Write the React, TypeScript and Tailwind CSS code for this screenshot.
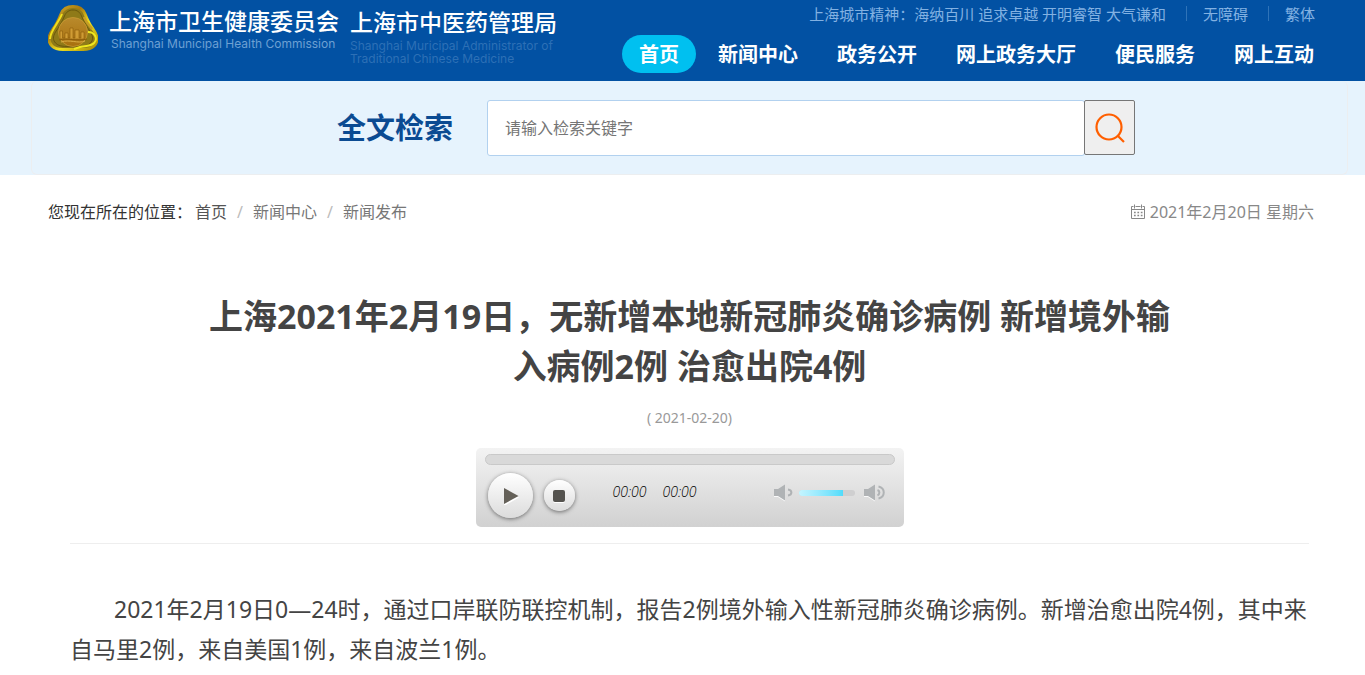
import React from "react";

const navItems = ["首页", "新闻中心", "政务公开", "网上政务大厅", "便民服务", "网上互动"];

function Emblem() {
  return (
    <svg viewBox="0 0 50 46" className="h-[46px] w-[50px] shrink-0" aria-hidden="true">
      <defs>
        <linearGradient id="rim" x1="0" y1="0" x2="1" y2="1">
          <stop offset="0" stopColor="#d9b32a" />
          <stop offset="0.35" stopColor="#a87a10" />
          <stop offset="0.6" stopColor="#f0e020" />
          <stop offset="1" stopColor="#a88a08" />
        </linearGradient>
        <linearGradient id="core" x1="0" y1="0" x2="0" y2="1">
          <stop offset="0" stopColor="#b98a2c" />
          <stop offset="1" stopColor="#a8700e" />
        </linearGradient>
      </defs>
      <path
        d="M25 1.500C31 1.500 35 4 37 9C39 14 41 19 45 24C50 31 50 37 46 41C43 44 39 44.500 35 44.500H15C11 44.500 7 44 4 41C0 37 0 31 5 24C9 19 11 14 13 9C15 4 19 1.500 25 1.500Z"
        fill="#8f7a18"
        stroke="url(#rim)"
        strokeWidth="3"
      />
      <path
        d="M25 5C29 5 32 7 33.500 11C36 17 39 22 42.500 27C45.500 32 45 35 42.500 38C40 41 34 41.500 30 41.500H20C15 41.500 10 41 7.500 38C5 35 4.500 32 7.500 27C11 22 14 17 16.500 11C18 7 21 5 25 5Z"
        fill="none"
        stroke="#6b580c"
        strokeWidth="1"
      />
      <path d="M14 9C11 17 2 26 2 34" fill="none" stroke="#efe01c" strokeWidth="2" />
      <path d="M36 12C38 17 41 20 44 24" fill="none" stroke="#c79e26" strokeWidth="2.500" />
      <path d="M40 27C47 27 50 34 46 38C42 42 38 40 32 42L26 44" fill="none" stroke="#f0e81f" strokeWidth="2" />
      <circle cx="25" cy="27" r="14.500" fill="url(#core)" stroke="#c99c33" strokeWidth="0.800" />
      <path d="M12 26H14.500V33H17V28H20V33H22V23H25V33H27V25H31V33H33V27H36V34H12Z" fill="#d09c34" stroke="#8a5c0c" strokeWidth="0.600" />
      <path d="M11 35C20 32 28 37 39 34" fill="none" stroke="#8a5c0c" strokeWidth="1" />
      <path d="M13 37C22 34 30 39 37 36" fill="none" stroke="#d9ac45" strokeWidth="1" />
    </svg>
  );
}

function Header() {
  return (
    <header className="flex h-[81px] justify-between bg-[#0251a3] pr-[50px] pl-12">
      <a href="#home" className="flex pt-[5px] text-white">
        <Emblem />
        <span className="ml-[11px] flex flex-col pt-px">
          <span className="text-[23px] leading-[30px] font-medium whitespace-nowrap">上海市卫生健康委员会</span>
          <span className="pl-0.5 font-['Inter'] text-xs leading-4 whitespace-nowrap text-[#6da0d3]">
            Shanghai Municipal Health Commission
          </span>
        </span>
        <span className="ml-[11px] flex flex-col pt-0.5">
          <span className="text-[23px] leading-[30px] font-medium whitespace-nowrap">上海市中医药管理局</span>
          <span className="flex flex-col pt-0.5 font-['Inter'] text-xs leading-[13px] whitespace-nowrap text-[#2d70b6]">
            <span>Shanghai Muricipal Administrator of</span>
            <span>Traditional Chinese Medicine</span>
          </span>
        </span>
      </a>
      <div className="flex flex-col items-end">
        <div className="flex h-[27px] items-center text-[15px] leading-5 whitespace-nowrap text-[#82b1e2]">
          <span>上海城市精神：海纳百川 追求卓越 开明睿智 大气谦和</span>
          <span className="mr-4 ml-5 h-[15px] w-px bg-[#2f73b8]" />
          <a href="#accessible">无障碍</a>
          <span className="mr-4 ml-5 h-[15px] w-px bg-[#2f73b8]" />
          <a href="#traditional">繁体</a>
        </div>
        <nav className="-mr-4 flex gap-[5px] pt-2">
          {navItems.map((item, i) => (
            <a
              key={item}
              href={`#nav-${i}`}
              className={
                i === 0
                  ? "flex h-[38px] items-center rounded-full bg-[#00c0f0] px-[17px] pt-0.5 text-xl font-bold whitespace-nowrap text-white"
                  : "flex h-[38px] items-center px-[17px] pt-0.5 text-xl font-bold whitespace-nowrap text-white"
              }
            >
              {item}
            </a>
          ))}
        </nav>
      </div>
    </header>
  );
}

function Search() {
  return (
    <section className="bg-[#e6f3fd] pr-[17px] pl-[31px]">
      <form
        className="flex h-[94px] items-start rounded-md border border-t-0 border-[#eceef0] pt-[19px] pr-[212px] pl-[305px]"
        onSubmit={(e) => e.preventDefault()}
      >
        <label htmlFor="keyword" className="mr-[34px] text-[29px] leading-[56px] font-bold whitespace-nowrap text-[#0b4b92]">
          全文检索
        </label>
        <input
          id="keyword"
          type="text"
          placeholder="请输入检索关键字"
          className="h-14 min-w-0 flex-1 rounded-[3px] border border-[#b2d1ef] bg-white px-[17px] text-base text-gray-700 placeholder:text-[#757575]"
        />
        <button
          type="submit"
          aria-label="检索"
          className="-ml-px flex h-[55px] w-[51px] items-center justify-center rounded-[2px] border border-[#767676] bg-[#efefef]"
        >
          <svg viewBox="0 0 32 32" className="size-8" fill="none" stroke="#ff5f00" strokeWidth="2.200">
            <circle cx="15" cy="15" r="12.500" />
            <path d="M23.500 23.500L30 30" />
          </svg>
        </button>
      </form>
    </section>
  );
}

function CalendarIcon() {
  return (
    <svg viewBox="0 0 16 16" className="size-4" fill="none" stroke="#888" aria-hidden="true">
      <path d="M3.500 2.500H1.500V14.500H14.500V2.500H12.500M5.500 2.500H10.500M4.500 0.500V4.500M11.500 0.500V4.500M1.500 5.500H14.500" />
      <path d="M4 8.500H12.500M4 11.500H12.500" strokeWidth="1.500" strokeDasharray="1.700 1.700" />
    </svg>
  );
}

function Breadcrumb() {
  return (
    <div className="flex h-[73px] items-center justify-between pr-[51px] pl-12 text-base whitespace-nowrap">
      <nav className="flex items-center text-[#777]">
        <span className="w-[147px] text-[#333]">您现在所在的位置：</span>
        <a href="#home" className="text-[#555]">首页</a>
        <span className="mx-[10px] text-[#bbb]">/</span>
        <a href="#news">新闻中心</a>
        <span className="mx-[10px] text-[#bbb]">/</span>
        <a href="#release">新闻发布</a>
      </nav>
      <div className="flex items-center gap-1 text-[#888]">
        <CalendarIcon />
        <time dateTime="2021-02-20">2021年2月20日 星期六</time>
      </div>
    </div>
  );
}

function Speaker({ loud }: { loud?: boolean }) {
  return (
    <svg viewBox="0 0 24 18" className="h-[18px] w-6" fill="none" aria-hidden="true">
      <path d="M1 6H5L12 1.500V17.500L5 13H1Z" fill="#fafafa" />
      <path d="M1 5H5L12 0.500V16.500L5 12H1Z" fill="#b0b3b5" />
      {loud ? (
        <path d="M14.500 6C17 7 17 10 14.500 11.500M15.500 2.500C22.500 4 22.500 13 15.500 14.500" stroke="#b0b3b5" strokeWidth="2" />
      ) : (
        <path d="M15 5.500C19.500 6 19.500 11 15 11.500" stroke="#b0b3b5" strokeWidth="2" />
      )}
    </svg>
  );
}

function Player() {
  return (
    <div className="mx-auto h-[79px] w-[428px] rounded-[5px] bg-linear-to-b from-[#f3f3f3] to-[#d1d1d1] px-[9px] pt-[6px]">
      <div className="h-[11px] rounded-full border border-[#c9c9c9] bg-[#d9d9d9]" />
      <div className="flex items-start pt-2 pl-[3px]">
        <button
          type="button"
          aria-label="播放"
          className="flex size-[45px] items-center justify-center rounded-full bg-linear-to-b from-white to-[#dcdcdc] shadow-[0_1px_4px_rgba(0,0,0,0.5)]"
        >
          <svg viewBox="0 0 18 18" className="size-[18px]">
            <path d="M3 2L18 10.500L3 19Z" fill="#fff" />
            <path d="M3 1L17.500 9L3 17Z" fill="#656159" />
          </svg>
        </button>
        <button
          type="button"
          aria-label="停止"
          className="mt-[7px] ml-[11px] flex size-[31px] items-center justify-center rounded-full bg-linear-to-b from-white to-[#dcdcdc] shadow-[0_1px_4px_rgba(0,0,0,0.5)]"
        >
          <span className="size-3 rounded-[2px] bg-[#55534f] shadow-[0_1px_0_#fff]" />
        </button>
        <div className="mt-[9px] ml-[38px] flex w-40 gap-4 font-['Open_Sans'] text-sm leading-5 font-light text-black italic">
          <span>00:00</span>
          <span>00:00</span>
        </div>
        <div className="mt-[11px] flex h-[18px] items-center">
          <Speaker />
          <div className="ml-0.5 h-[6px] w-14 rounded-full bg-[#cfcfd0]">
            <div className="h-full w-[80%] rounded-l-full bg-linear-to-r from-[#c4f5ff] to-[#4fdcfb]" />
          </div>
          <div className="ml-2 flex">
            <Speaker loud />
          </div>
        </div>
      </div>
    </div>
  );
}

export default function App() {
  return (
    <div className="bg-white font-['Noto_Sans','Noto_Sans_CJK_SC',sans-serif]" lang="zh-CN">
      <Header />
      <Search />
      <Breadcrumb />
      <article className="pr-14 pl-[70px] text-[#444]">
        <h1 className="px-[126px] pt-[43px] text-center text-[34px] leading-[50px] font-bold">
          上海2021年2月19日，无新增本地新冠肺炎确诊病例 新增境外输入病例2例 治愈出院4例
        </h1>
        <p className="pt-[17px] pb-5 text-center text-sm leading-5 text-[#999]">( 2021-02-20)</p>
        <Player />
        <hr className="mt-4 border-[#eee]" />
        <p className="pt-[45px] indent-11 text-[23px] leading-10">
          2021年2月19日0—24时，通过口岸联防联控机制，报告2例境外输入性新冠肺炎确诊病例。新增治愈出院4例，其中来自马里2例，来自美国1例，来自波兰1例。
        </p>
      </article>
    </div>
  );
}
